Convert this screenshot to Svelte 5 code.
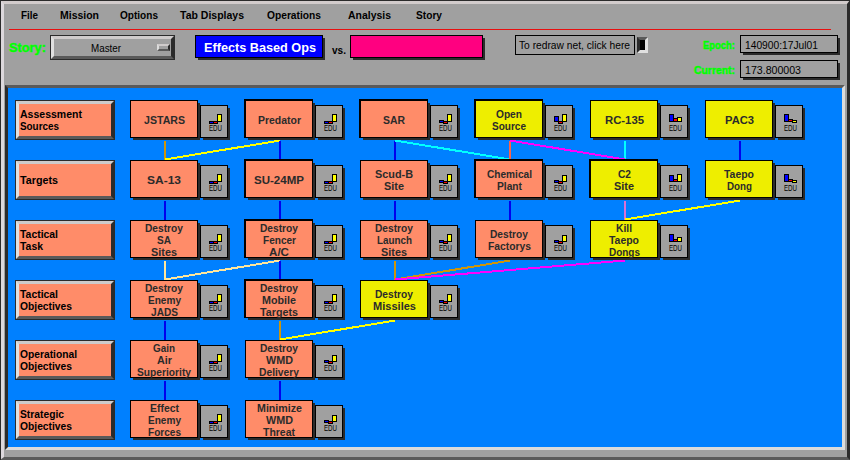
<script>
  const menu = [
    ['File', 17, 22], ['Mission', 39, 21], ['Options', 38, 22], ['Tab Displays', 64, 23],
    ['Operations', 54, 27], ['Analysis', 43, 25], ['Story', 26, 0]
  ];

  // Drawn width of every label word on the net
  const widths = {
    Assessment: 62, Sources: 39, Targets: 38, Tactical: 38, Task: 23, Objectives: 52,
    Operational: 57, Strategic: 44, JSTARS: 41, 'SA-13': 34, Predator: 43, 'SU-24MP': 50,
    SAR: 22, 'Scud-B': 38, Site: 20, Open: 26, Source: 34, Chemical: 45, Plant: 25,
    'RC-135': 39, C2: 13, PAC3: 29, Taepo: 30, Dong: 25, Destroy: 38, SA: 14, Sites: 26,
    Fencer: 33, 'A/C': 20, Enemy: 33, JADS: 27, Mobile: 34, Launch: 35, Factorys: 43,
    Kill: 16, Dongs: 31, Missiles: 43, Gain: 22, Air: 15, Superiority: 54, WMD: 27,
    Delivery: 40, Effect: 29, Forces: 33, Minimize: 45, Threat: 32
  };

  // Bar extents (top, bottom) for blue, red and yellow
  const A = [[16, 19], [16, 19], [9, 17]];
  const B = [[15, 18], [16, 19], [9, 17]];
  const C = [[15, 18], [16, 19], [10, 17]];
  const P = [[9, 17], [14, 17], [15, 18]];

  const node = (text, bars, hot = false, thick = false) => ({ lines: text.split('|'), bars, hot, thick });

  const rows = [
    { head: 'Assessment|Sources', nodes: [
      node('JSTARS', A), node('Predator', A, false, true), node('SAR', B, false, true),
      node('Open|Source', [[11, 17], [16, 19], [9, 17]], true, true),
      node('RC-135', [[9, 17], [13, 17], [12, 17]], true), node('PAC3', P, true)] },
    { head: 'Targets', nodes: [
      node('SA-13', A), node('SU-24MP', A, false, true), node('Scud-B|Site', B),
      node('Chemical|Plant', C, false, true),
      node('C2|Site', [[10, 17], [14, 17], [9, 17]], true, true), node('Taepo|Dong', P, true)] },
    { head: 'Tactical|Task', nodes: [
      node('Destroy|SA|Sites', A), node('Destroy|Fencer|A/C', A, false, true),
      node('Destroy|Launch|Sites', B), node('Destroy|Factorys', C),
      node('Kill|Taepo|Dongs', [[9, 17], [14, 17], [12, 17]], true)] },
    { head: 'Tactical|Objectives', nodes: [
      node('Destroy|Enemy|JADS', A), node('Destroy|Mobile|Targets', A, false, true),
      node('Destroy|Missiles', B, true)] },
    { head: 'Operational|Objectives', nodes: [
      node('Gain|Air|Superiority', A), node('Destroy|WMD|Delivery', C)] },
    { head: 'Strategic|Objectives', nodes: [
      node('Effect|Enemy|Forces', A), node('Minimize|WMD|Threat', C)] }
  ];

  const brown = '#cd950c', blue = '#0000ee', yellow = '#ffff00', cyan = '#00ffff', magenta = '#ff00ff', cream = '#ffe69c';
  // [row, from column, to column, colour]
  const links = [
    [0, 0, 0, brown], [0, 1, 0, yellow], [0, 1, 1, blue], [0, 2, 2, blue], [0, 2, 3, cyan],
    [0, 3, 3, '#ff6347'], [0, 4, 4, cyan], [0, 3, 4, magenta], [0, 5, 5, blue],
    [1, 0, 0, blue], [1, 1, 1, blue], [1, 2, 2, blue], [1, 3, 3, blue], [1, 4, 4, '#da70d6'], [1, 5, 4, yellow],
    [2, 0, 0, cream], [2, 1, 0, cream], [2, 1, 1, blue], [2, 2, 2, brown], [2, 3, 2, brown], [2, 4, 2, magenta],
    [3, 0, 0, blue], [3, 1, 1, brown], [3, 2, 1, yellow],
    [4, 0, 0, blue], [4, 1, 1, blue]
  ];
  const fills = ['#0000ff', '#ff0000', '#ffff00'];
</script>

{#snippet word(text, w, size = 11)}
  <svg class="word" width={w} height="12"><text x="0" y="11" font-size={size} textLength={w} lengthAdjust="spacingAndGlyphs">{text}</text></svg>
{/snippet}

<div class="window">
  <nav>
    {#each menu as [text, w, gap]}
      <span style="margin-right:{gap}px">{@render word(text, w, 11.5)}</span>
    {/each}
  </nav>
  <div class="rule"></div>

  <header>
    <span class="green story">{@render word('Story:', 37, 13.5)}</span>
    <button class="master">
      <span class="master-text">{@render word('Master', 30, 11.5)}</span>
      <i class="knob"></i>
    </button>
    <div class="side ops">{@render word('Effects Based Ops', 112, 13)}</div>
    <span class="vs">{@render word('vs.', 14)}</span>
    <div class="side enemy"></div>
    <div class="redraw">{@render word('To redraw net, click here', 111, 11.5)}</div>
    <i class="toggle"></i>
    <div class="clock">
      <div class="line"><span class="green">{@render word('Epoch:', 32)}</span><div class="field">{@render word('140900:17Jul01', 73, 11.5)}</div></div>
      <div class="line"><span class="green">{@render word('Current:', 41)}</span><div class="field">{@render word('173.800003', 56, 11.5)}</div></div>
    </div>
  </header>

  <main>
    <svg class="links" width="834" height="359" shape-rendering="crispEdges">
      {#each links as [r, a, b, color]}
        <line x1={157 + a * 115} y1={52.5 + r * 60} x2={157 + b * 115} y2={71.5 + r * 60} stroke={color} stroke-width="2" />
      {/each}
    </svg>
    {#each rows as row}
      <section>
        <button class="head">
          {#each row.head.split('|') as t}{@render word(t, widths[t])}{/each}
        </button>
        {#each row.nodes as n}
          <div class="cell">
            <div class="node" class:hot={n.hot} class:thick={n.thick}>
              {#each n.lines as t}{@render word(t, widths[t])}{/each}
            </div>
            <div class="edu">
              <svg width="26" height="31">
                <g shape-rendering="crispEdges">
                  {#each n.bars as [top, bottom], i}
                    <rect x={8 + i * 4} y={top - 1} width="5" height={bottom - top} fill="#000" />
                    <rect x={9 + i * 4} y={top} width="3" height={bottom - top - 2} fill={fills[i]} />
                  {/each}
                </g>
                <text x="8" y="25" font-size="8.5" textLength="13" lengthAdjust="spacingAndGlyphs">EDU</text>
              </svg>
            </div>
          </div>
        {/each}
      </section>
    {/each}
  </main>
</div>

<style>
  .window {
    box-sizing: border-box; width: 850px; height: 460px; background: #a0a0a0;
    border: solid; border-width: 4px 3px 3px 4px; border-color: #d2cccc #2b2b2b #5a5a5a #dcd8dc;
    font-family: "Liberation Sans", Arial, sans-serif; overflow: hidden; position: relative;
  }
  .window::before {
    content: ""; position: absolute; left: -4px; top: -4px; width: 850px; height: 460px;
    box-sizing: border-box; border: solid #2b2b2b; border-width: 1px 0 0 1px; pointer-events: none;
  }
  .window { overflow: visible; }
  .word { display: block; overflow: visible; flex: none; }
  .word text { font-weight: 700; fill: currentColor; }
  nav { display: flex; height: 25px; padding: 4px 0 0 17px; box-sizing: border-box; color: #000; }
  .rule { width: 822px; height: 1px; margin-left: 5px; background: #e81010; }
  header { display: flex; align-items: flex-start; height: 55px; padding: 5px 0 0 5px; box-sizing: border-box; }
  .green { color: #00ff00; }
  .green :global(text) { stroke: #00ff00; stroke-width: 0.5px; }
  .story { margin-top: 6px; }
  button { padding: 0; margin: 0; box-sizing: border-box; font: inherit; border-radius: 0; color: #000; }
  .master {
    width: 123px; height: 23px; margin: 1px 1px 0 5px; display: flex; align-items: center;
    background: #a0a0a0; border: 3px solid; border-color: #cfcbcb #2b2b2b #5a5a5a #e0e0e0;
    outline: 1px solid #2b2b2b;
  }
  .master-text { margin-left: 37px; margin-top: -2px; }
  .master-text :global(text), .redraw :global(text), .field :global(text) { font-weight: 400; }
  .knob { flex: none; width: 13px; height: 7px; box-sizing: border-box; margin: 0 0 0 36px; border: 2px solid; border-color: #cfcbcb #2b2b2b #5a5a5a #dcdcdc; }
  .side { box-sizing: border-box; height: 23px; border: 1px solid #000; box-shadow: 2.5px 2.5px 0 -0.5px #2b2b2b; }
  .ops { width: 128px; margin-left: 20px; background: #0000ff; color: #fff; padding: 5px 0 0 8px; }
  .vs { margin: 8px 0 0 9px; }
  .enemy { width: 133px; margin-left: 4px; background: #ff0080; }
  .redraw { box-sizing: border-box; width: 120px; height: 20px; margin-left: 32px; border: 1px solid #000; padding: 2px 0 0 3px; }
  .toggle { width: 11px; height: 16px; box-sizing: border-box; margin: 2px 0 0 2px; background: #000; border: 3px solid; border-color: #5a5a5a #e0e0e0 #e0e0e0 #2b2b2b; }
  .clock { display: flex; flex-direction: column; gap: 7px; width: 190px; }
  .line { display: flex; justify-content: flex-end; gap: 5px; }
  .line .green { margin-top: 3px; }
  .field { box-sizing: border-box; width: 98px; height: 18px; border: 1px solid #000; padding: 2px 0 0 4px; box-shadow: 2.5px 2.5px 0 -0.5px #2b2b2b; }
  main {
    position: relative; box-sizing: border-box; width: 840px; height: 365px; margin-left: 1px;
    background: #0080ff; border: 3px solid; border-color: #5a5a5a #dcdcdc #dcdcdc #2b2b2b;
    padding: 12px 0 0 7px; display: flex; flex-direction: column; gap: 20px;
  }
  .links { position: absolute; left: 0; top: 0; }
  section { display: flex; height: 40px; position: relative; }
  .head {
    width: 98px; height: 38px; margin: 1px 16px 1px 1px; background: #ff8c69;
    border: 3px solid; border-color: #cfcbcb #2b2b2b #5a5a5a #e0e0e0; outline: 1px solid #2b2b2b;
    display: flex; flex-direction: column; justify-content: center; align-items: flex-start; padding: 0 0 2px 1px;
  }
  .cell { display: flex; width: 115px; }
  .node {
    box-sizing: border-box; width: 68px; height: 38px; border: 1px solid #000; background: #ff8c69; color: #2b2b2b;
    display: flex; flex-direction: column; align-items: center; justify-content: center;
    box-shadow: 2.5px 2.5px 0 -0.5px #2b2b2b;
  }
  .node.hot { background: #eeee00; }
  .node.thick { box-shadow: -1px -1px #000, -1px 0 #000, 0 -1px #000, 2.5px 2.5px 0 -0.5px #2b2b2b; }
  .edu { box-sizing: border-box; width: 28px; height: 33px; margin: 5px 0 0 2px; border: 1px solid #000; background: #a0a0a0; box-shadow: 2.5px 2.5px 0 -0.5px #2b2b2b; }
  .edu svg { display: block; }
</style>
